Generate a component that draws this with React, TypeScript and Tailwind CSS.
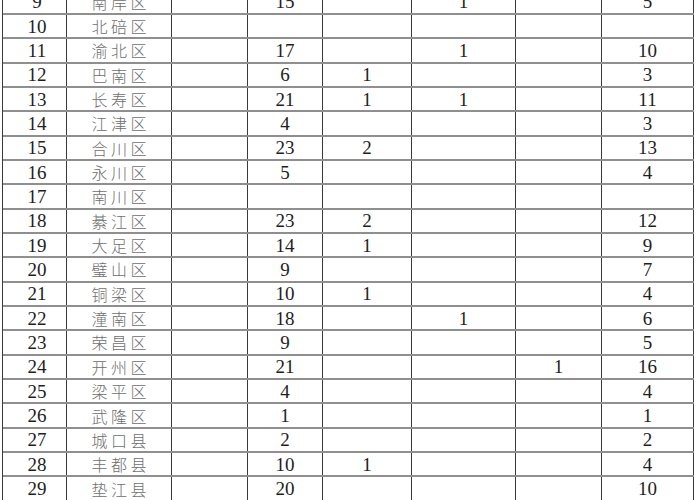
import React from "react";

type Row = [string, string, string, string, string, string, string, string];

const rows: Row[] = [
  ["9", "南岸区", "", "15", "", "1", "", "5"],
  ["10", "北碚区", "", "", "", "", "", ""],
  ["11", "渝北区", "", "17", "", "1", "", "10"],
  ["12", "巴南区", "", "6", "1", "", "", "3"],
  ["13", "长寿区", "", "21", "1", "1", "", "11"],
  ["14", "江津区", "", "4", "", "", "", "3"],
  ["15", "合川区", "", "23", "2", "", "", "13"],
  ["16", "永川区", "", "5", "", "", "", "4"],
  ["17", "南川区", "", "", "", "", "", ""],
  ["18", "綦江区", "", "23", "2", "", "", "12"],
  ["19", "大足区", "", "14", "1", "", "", "9"],
  ["20", "璧山区", "", "9", "", "", "", "7"],
  ["21", "铜梁区", "", "10", "1", "", "", "4"],
  ["22", "潼南区", "", "18", "", "1", "", "6"],
  ["23", "荣昌区", "", "9", "", "", "", "5"],
  ["24", "开州区", "", "21", "", "", "1", "16"],
  ["25", "梁平区", "", "4", "", "", "", "4"],
  ["26", "武隆区", "", "1", "", "", "", "1"],
  ["27", "城口县", "", "2", "", "", "", "2"],
  ["28", "丰都县", "", "10", "1", "", "", "4"],
  ["29", "垫江县", "", "20", "", "", "", "10"],
  ["30", "", "", "", "", "", "", ""],
];

const widths = [
  "w-[64px]",
  "w-[105px]",
  "w-[76px]",
  "w-[75px]",
  "w-[89px]",
  "w-[104px]",
  "w-[86px]",
  "w-[92px]",
];

const serif = { fontFamily: '"Liberation Serif", "Times New Roman", serif' };
const cjk = { fontFamily: '"Noto Sans CJK SC", "Noto Sans", sans-serif' };

export default function App() {
  return (
    <div className="w-[700px] h-[500px] overflow-hidden bg-white">
      <div className="mt-[-9.5px] ml-[2px] w-[692px] border-l border-[#3a3a3a]">
        {rows.map((r, i) => (
          <div
            key={i}
            className="flex h-[24.35px] border-b-2 border-[#8f8f8f]"
          >
            {r.map((c, j) => (
              <div
                key={j}
                className={`${widths[j]} shrink-0 box-border border-r border-[#3a3a3a] flex items-center justify-center ${
                  j === 0 ? "pl-[5px]" : ""
                }`}
              >
                {j === 1 ? (
                  <span
                    className="text-[16px] leading-none tracking-[3.5px] pl-[3.5px] text-[#6e6e6e] font-light"
                    style={cjk}
                  >
                    {c}
                  </span>
                ) : (
                  <span
                    className="text-[19px] leading-none text-[#1e1e1e]"
                    style={serif}
                  >
                    {c}
                  </span>
                )}
              </div>
            ))}
          </div>
        ))}
      </div>
    </div>
  );
}
